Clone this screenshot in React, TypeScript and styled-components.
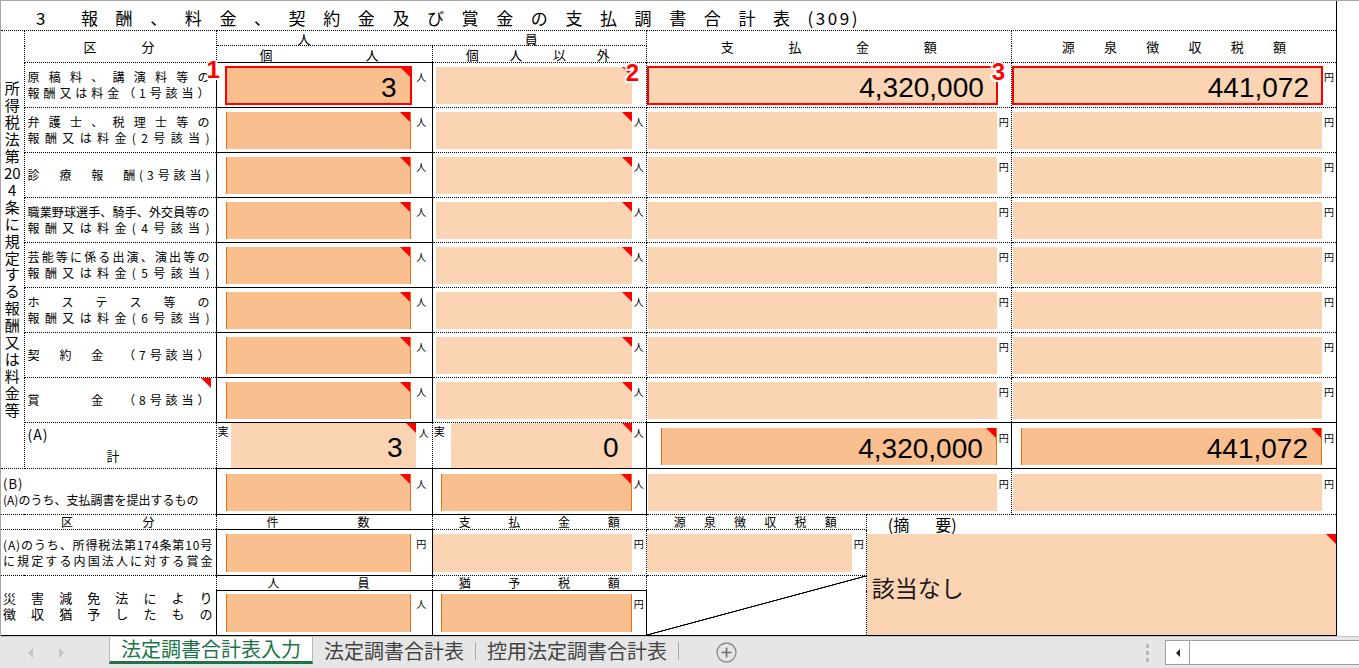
import React from 'react';
import styled, { createGlobalStyle } from 'styled-components';

const GlobalStyle = createGlobalStyle`
  html, body { margin: 0; padding: 0; background: #ffffff; }
  body { font-family: "Noto Sans CJK JP", "Noto Sans", sans-serif; color: #000; }
  * { box-sizing: border-box; }
`;

const Page = styled.div`
  width: 1359px;
  height: 668px;
  overflow: hidden;
  display: flex;
  flex-direction: column;
  background: #fff;
`;

const Sheet = styled.div`
  flex: none;
  height: 636px;
  border-top: 1px solid #a6a6a6;
  border-left: 1px solid #a6a6a6;
  display: flex;
  align-items: flex-start;
`;

const Grid = styled.table`
  border-collapse: collapse;
  table-layout: fixed;
  width: 1336px;
`;

const Col = styled.col<{ $w: number }>`
  width: ${(p) => p.$w}px;
`;

const Row = styled.tr<{ $h: number }>`
  height: ${(p) => p.$h}px;
`;

const line = (c: string) => (c === 's' ? '1px solid #000' : c === 'd' ? '1px dotted #000' : 'none');

const Cell = styled.td<{ $e?: string }>`
  position: relative;
  padding: 0;
  vertical-align: top;
  border-top: ${(p) => line((p.$e ?? 'dddd')[0])};
  border-right: ${(p) => line((p.$e ?? 'dddd')[1])};
  border-bottom: ${(p) => line((p.$e ?? 'dddd')[2])};
  border-left: ${(p) => line((p.$e ?? 'dddd')[3])};
`;

const Title = styled.div`
  height: 29px;
  display: flex;
  align-items: center;
  padding: 3px 0 0 35px;
  font-size: 17px;
  white-space: nowrap;
`;

const TitleNo = styled.span`
  width: 45px;
`;

const TitleSpaced = styled.span`
  letter-spacing: 17.6px;
`;

const TitleCode = styled.span`
  letter-spacing: 2.5px;
`;

const VerticalText = styled.div<{ $h: number }>`
  height: ${(p) => p.$h}px;
  display: flex;
  flex-direction: column;
  align-items: center;
  justify-content: center;
  font-size: 15px;
  line-height: 16.9px;
`;

const Spread = styled.div<{ $h?: number; $pl: number; $pr: number; $size?: number; $pt?: number }>`
  height: ${(p) => (p.$h ? `${p.$h}px` : 'auto')};
  display: flex;
  align-items: center;
  justify-content: space-between;
  padding: ${(p) => p.$pt ?? 0}px ${(p) => p.$pr}px 0 ${(p) => p.$pl}px;
  font-size: ${(p) => p.$size ?? 13}px;
  line-height: 1;
  white-space: nowrap;
`;

const RowLabel = styled.div<{ $h: number; $mark?: boolean; $pl?: number; $pr?: number; $size?: number }>`
  position: relative;
  height: ${(p) => p.$h}px;
  display: flex;
  flex-direction: column;
  justify-content: center;
  padding: 0 ${(p) => p.$pr ?? 6}px 0 ${(p) => p.$pl ?? 3}px;
  font-size: ${(p) => p.$size ?? 12}px;
  line-height: 16px;
  &::after {
    content: '';
    display: ${(p) => (p.$mark ? 'block' : 'none')};
    position: absolute;
    top: 0;
    right: 5px;
    border-top: 10px solid #ff0000;
    border-left: 10px solid transparent;
  }
`;

const LabelLine = styled.div`
  display: flex;
  justify-content: space-between;
  white-space: nowrap;
`;

const PlainLine = styled.div<{ $ls?: number; $size?: number }>`
  white-space: nowrap;
  letter-spacing: ${(p) => p.$ls ?? 0}px;
  font-size: ${(p) => (p.$size ? `${p.$size}px` : 'inherit')};
`;

const SumLabel = styled.div<{ $h: number }>`
  height: ${(p) => p.$h}px;
  display: flex;
  flex-direction: column;
  padding: 4px 0 0 3px;
  font-size: 14px;
  line-height: 14px;
`;

const SumMark = styled.span`
  margin: 8px 0 0 79px;
  font-size: 13px;
`;

const Slot = styled.div<{ $h: number; $pt?: number; $pb?: number }>`
  height: ${(p) => p.$h}px;
  display: flex;
  padding: ${(p) => p.$pt ?? 4}px 0 ${(p) => p.$pb ?? 3}px;
`;

const Field = styled.div<{ $tone: 'dark' | 'light'; $ml?: number; $hl?: boolean; $mark?: boolean }>`
  position: relative;
  flex: 1;
  min-width: 0;
  margin-left: ${(p) => p.$ml ?? 0}px;
  background: ${(p) => (p.$tone === 'dark' ? '#fabf8f' : '#fbd4b4')};
  border-left: ${(p) => (p.$tone === 'dark' ? '1px solid #e8701a' : 'none')};
  border-right: ${(p) => (p.$tone === 'dark' ? '1px solid #e8701a' : 'none')};
  outline: ${(p) => (p.$hl ? '2px solid #ff0000' : 'none')};
  outline-offset: -1px;
  display: flex;
  align-items: center;
  justify-content: flex-end;
  padding: 4px 13px 0 0;
  font-family: "Liberation Sans", Arial, sans-serif;
  font-size: 28px;
  line-height: 28px;
  color: #000;
  &::after {
    content: '';
    display: ${(p) => (p.$mark ? 'block' : 'none')};
    position: absolute;
    top: 0;
    right: 0;
    border-top: 10px solid #ff0000;
    border-left: 10px solid transparent;
  }
`;

const NoteField = styled(Field)`
  justify-content: flex-start;
  padding: 6px 0 0 5px;
  font-family: "Noto Sans CJK JP", sans-serif;
  font-size: 23px;
  color: #1a1a1a;
`;

const Unit = styled.span<{ $w: number }>`
  flex: none;
  width: ${(p) => p.$w}px;
  text-align: center;
  font-size: 10px;
  line-height: 10px;
  padding-top: 5px;
`;

const Jitsu = styled.span<{ $w: number }>`
  flex: none;
  width: ${(p) => p.$w}px;
  font-size: 11px;
  line-height: 11px;
  padding: 3px 0 0 1px;
`;

const Badge = styled.span<{ $x: number; $y: number }>`
  position: absolute;
  left: ${(p) => p.$x}px;
  top: ${(p) => p.$y}px;
  font-family: "Liberation Sans", Arial, sans-serif;
  font-weight: 700;
  font-size: 24px;
  line-height: 24px;
  color: #ff0000;
  text-shadow: -1.5px -1.5px 0 #fff, 1.5px -1.5px 0 #fff, -1.5px 1.5px 0 #fff, 1.5px 1.5px 0 #fff, 0 -2px 0 #fff,
    0 2px 0 #fff, -2px 0 0 #fff, 2px 0 0 #fff;
  z-index: 2;
`;

const NoteHead = styled.div`
  height: 14px;
  display: flex;
  padding: 1px 0 0 21px;
  font-size: 16px;
  line-height: 16px;
  white-space: nowrap;
  gap: 26px;
`;

const Diagonal = styled.div<{ $h: number }>`
  height: ${(p) => p.$h}px;
  background: linear-gradient(
    to bottom right,
    transparent calc(50% - 0.8px),
    #000 calc(50% - 0.4px),
    #000 calc(50% + 0.4px),
    transparent calc(50% + 0.8px)
  );
`;

/* ---- Tab bar ---- */
const TabBar = styled.div`
  flex: none;
  height: 32px;
  background: #e6e6e6;
  border-top: 1px solid #c6c6c6;
  display: flex;
  align-items: flex-start;
`;

const NavArrows = styled.div`
  flex: none;
  width: 109px;
  height: 31px;
  display: flex;
  align-items: center;
  padding: 0 0 0 28px;
  gap: 26px;
`;

const Arrow = styled.span<{ $dir: 'left' | 'right' }>`
  width: 0;
  height: 0;
  border-top: 5px solid transparent;
  border-bottom: 5px solid transparent;
  ${(p) => (p.$dir === 'left' ? 'border-right: 5px solid #c4c4c4;' : 'border-left: 5px solid #c4c4c4;')}
`;

const Tab = styled.div<{ $active?: boolean }>`
  flex: none;
  height: 27px;
  padding: 0 11px;
  display: flex;
  align-items: center;
  font-size: 20px;
  line-height: 24px;
  white-space: nowrap;
  color: ${(p) => (p.$active ? '#217346' : '#444444')};
  background: ${(p) => (p.$active ? '#ffffff' : 'transparent')};
  border-left: ${(p) => (p.$active ? '1px solid #b8b8b8' : 'none')};
  border-right: ${(p) => (p.$active ? '1px solid #b8b8b8' : 'none')};
  border-bottom: ${(p) => (p.$active ? '3px solid #217346' : 'none')};
`;

const TabSep = styled.span`
  flex: none;
  width: 1px;
  height: 18px;
  margin-top: 5px;
  background: #a8a8a8;
`;

const AddButton = styled.div`
  flex: none;
  margin: 5px 0 0 37px;
  width: 21px;
  height: 21px;
  display: flex;
  align-items: center;
  justify-content: center;
`;

const Spacer = styled.div`
  flex: 1;
`;

const Grip = styled.div`
  flex: none;
  width: 3px;
  margin-top: 7px;
  display: flex;
  flex-direction: column;
  gap: 3px;
  & > span {
    width: 3px;
    height: 4px;
    background: #b8b8b8;
  }
`;

const ScrollBox = styled.div`
  flex: none;
  width: 194px;
  height: 25px;
  margin: 3px 0 0 16px;
  background: #fff;
  border: 1px solid #a0a0a0;
  border-right: none;
  display: flex;
`;

const ScrollBtn = styled.div`
  width: 24px;
  height: 100%;
  border-right: 1px solid #a0a0a0;
  display: flex;
  align-items: center;
  justify-content: center;
  &::before {
    content: '';
    border-top: 4px solid transparent;
    border-bottom: 4px solid transparent;
    border-right: 4px solid #222;
  }
`;

const chars = (s: string) => Array.from(s).map((c, i) => <span key={i}>{c}</span>);

const COLS = [23, 192, 216, 214, 220, 145, 325];
const VERT = ['所', '得', '税', '法', '第', '20', '4', '条', 'に', '規', '定', 'す', 'る', '報', '酬', '又', 'は', '料', '金', '等'];

const ROWS: { lines: string[]; mark?: boolean }[] = [
  { lines: ['原稿料、講演料等の', '報酬又は料金（1号該当）'] },
  { lines: ['弁護士、税理士等の', '報酬又は料金(2号該当)'] },
  { lines: ['診　療　報　酬(3号該当)'] },
  { lines: ['職業野球選手、騎手、外交員等の', '報酬又は料金(4号該当)'] },
  { lines: ['芸能等に係る出演、演出等の', '報酬又は料金(5号該当)'] },
  { lines: ['ホステス等の', '報酬又は料金(6号該当)'] },
  { lines: ['契　約　金　（7号該当）'] },
  { lines: ['賞　　　金　（8号該当）'], mark: true },
];

export default function App() {
  return (
    <>
      <GlobalStyle />
      <Page>
        <Sheet>
          <Grid>
            <colgroup>
              {COLS.map((w, i) => (
                <Col key={i} $w={w} />
              ))}
            </colgroup>
            <tbody>
              <Row $h={29}>
                <Cell colSpan={7} $e="nsdn">
                  <Title>
                    <TitleNo>3</TitleNo>
                    <TitleSpaced>報酬、料金、契約金及び賞金の支払調書合計表</TitleSpaced>
                    <TitleCode>(309)</TitleCode>
                  </Title>
                </Cell>
              </Row>

              <Row $h={15}>
                <Cell rowSpan={11} $e="dddn">
                  <VerticalText $h={437}>
                    {VERT.map((c, i) => (
                      <span key={i}>{c}</span>
                    ))}
                  </VerticalText>
                </Cell>
                <Cell rowSpan={2}>
                  <Spread $h={31} $pl={59} $pr={61}>{chars('区分')}</Spread>
                </Cell>
                <Cell colSpan={2}>
                  <Spread $h={14} $pl={81} $pr={108}>{chars('人員')}</Spread>
                </Cell>
                <Cell colSpan={2} rowSpan={2}>
                  <Spread $h={31} $pl={74} $pr={74}>{chars('支払金額')}</Spread>
                </Cell>
                <Cell rowSpan={2} $e="dsdd">
                  <Spread $h={31} $pl={50} $pr={50}>{chars('源泉徴収税額')}</Spread>
                </Cell>
              </Row>
              <Row $h={17}>
                <Cell $e="ddsd">
                  <Spread $h={16} $pl={43} $pr={53}>{chars('個人')}</Spread>
                </Cell>
                <Cell>
                  <Spread $h={16} $pl={33} $pr={36}>{chars('個人以外')}</Spread>
                </Cell>
              </Row>

              {ROWS.map((r, i) => {
                const first = i === 0;
                return (
                  <Row key={i} $h={45}>
                    <Cell>
                      <RowLabel $h={44} $mark={r.mark}>
                        {r.lines.map((l) => (
                          <LabelLine key={l}>{chars(l)}</LabelLine>
                        ))}
                      </RowLabel>
                    </Cell>
                    <Cell $e="ssss">
                      <Slot $h={44}>
                        <Field $tone="dark" $ml={9} $mark $hl={first}>
                          {first ? '3' : ''}
                        </Field>
                        <Unit $w={21}>人</Unit>
                      </Slot>
                      {first && (
                        <Badge $x={-10} $y={-5}>
                          1
                        </Badge>
                      )}
                    </Cell>
                    <Cell>
                      <Slot $h={44}>
                        <Field $tone="light" $ml={3} $mark />
                        <Unit $w={14}>{first ? '' : '人'}</Unit>
                      </Slot>
                      {first && (
                        <Badge $x={193} $y={-2}>
                          2
                        </Badge>
                      )}
                    </Cell>
                    <Cell colSpan={2}>
                      <Slot $h={44}>
                        <Field $tone="light" $ml={1} $hl={first}>
                          {first ? '4,320,000' : ''}
                        </Field>
                        <Unit $w={14}>{first ? '' : '円'}</Unit>
                      </Slot>
                      {first && (
                        <Badge $x={345} $y={-3}>
                          3
                        </Badge>
                      )}
                    </Cell>
                    <Cell $e="dsdd">
                      <Slot $h={44}>
                        <Field $tone="light" $ml={1} $hl={first}>
                          {first ? '441,072' : ''}
                        </Field>
                        <Unit $w={14}>円</Unit>
                      </Slot>
                    </Cell>
                  </Row>
                );
              })}

              <Row $h={46}>
                <Cell>
                  <SumLabel $h={45}>
                    <PlainLine $ls={1}>(A)</PlainLine>
                    <SumMark>計</SumMark>
                  </SumLabel>
                </Cell>
                <Cell $e="sdsd">
                  <Slot $h={45} $pt={0} $pb={0}>
                    <Jitsu $w={14}>実</Jitsu>
                    <Field $tone="light" $mark>
                      3
                    </Field>
                    <Unit $w={16}>人</Unit>
                  </Slot>
                </Cell>
                <Cell $e="dssd">
                  <Slot $h={45} $pt={0} $pb={0}>
                    <Jitsu $w={18}>実</Jitsu>
                    <Field $tone="light" $mark>
                      0
                    </Field>
                    <Unit $w={14}>人</Unit>
                  </Slot>
                </Cell>
                <Cell colSpan={2} $e="ssss">
                  <Slot $h={45} $pt={5} $pb={3}>
                    <Field $tone="dark" $ml={14} $mark>
                      4,320,000
                    </Field>
                    <Unit $w={14}>円</Unit>
                  </Slot>
                </Cell>
                <Cell $e="ssss">
                  <Slot $h={45} $pt={5} $pb={3}>
                    <Field $tone="dark" $ml={9} $mark>
                      441,072
                    </Field>
                    <Unit $w={14}>円</Unit>
                  </Slot>
                </Cell>
              </Row>

              <Row $h={46}>
                <Cell colSpan={2} $e="dddn">
                  <RowLabel $h={45} $pl={2} $pr={0}>
                    <PlainLine $ls={1} $size={13}>(B)</PlainLine>
                    <PlainLine>(A)のうち、支払調書を提出するもの</PlainLine>
                  </RowLabel>
                </Cell>
                <Cell $e="ssss">
                  <Slot $h={45} $pt={5} $pb={3}>
                    <Field $tone="dark" $ml={9} $mark />
                    <Unit $w={21}>人</Unit>
                  </Slot>
                </Cell>
                <Cell $e="ssss">
                  <Slot $h={45} $pt={5} $pb={3}>
                    <Field $tone="dark" $ml={8} $mark />
                    <Unit $w={14}>人</Unit>
                  </Slot>
                </Cell>
                <Cell colSpan={2}>
                  <Slot $h={45} $pt={5} $pb={3}>
                    <Field $tone="light" $ml={1} />
                    <Unit $w={14}>円</Unit>
                  </Slot>
                </Cell>
                <Cell $e="dsdd">
                  <Slot $h={45} $pt={5} $pb={3}>
                    <Field $tone="light" $ml={1} />
                    <Unit $w={14}>円</Unit>
                  </Slot>
                </Cell>
              </Row>

              <Row $h={15}>
                <Cell colSpan={2} $e="dddn">
                  <Spread $h={14} $pl={60} $pr={61} $size={12}>
                    {chars('区分')}
                  </Spread>
                </Cell>
                <Cell $e="ddsd">
                  <Spread $h={14} $pl={50} $pr={62} $size={12}>
                    {chars('件数')}
                  </Spread>
                </Cell>
                <Cell>
                  <Spread $h={14} $pl={26} $pr={26} $size={12}>
                    {chars('支払金額')}
                  </Spread>
                </Cell>
                <Cell>
                  <Spread $h={14} $pl={27} $pr={29} $size={12}>
                    {chars('源泉徴収税額')}
                  </Spread>
                </Cell>
                <Cell colSpan={2} $e="dsnd">
                  <NoteHead>
                    <span>(摘</span>
                    <span>要)</span>
                  </NoteHead>
                </Cell>
              </Row>

              <Row $h={46}>
                <Cell colSpan={2} $e="dddn">
                  <RowLabel $h={45} $pl={2} $pr={3}>
                    <LabelLine>{chars('(A)のうち、所得税法第174条第10号')}</LabelLine>
                    <LabelLine>{chars('に規定する内国法人に対する賞金')}</LabelLine>
                  </RowLabel>
                </Cell>
                <Cell $e="ssss">
                  <Slot $h={45}>
                    <Field $tone="dark" $ml={9} />
                    <Unit $w={21}>円</Unit>
                  </Slot>
                </Cell>
                <Cell>
                  <Slot $h={45}>
                    <Field $tone="light" />
                    <Unit $w={14}>円</Unit>
                  </Slot>
                </Cell>
                <Cell>
                  <Slot $h={45}>
                    <Field $tone="light" />
                    <Unit $w={14}>円</Unit>
                  </Slot>
                </Cell>
                <Cell colSpan={2} rowSpan={3} $e="nssd">
                  <Slot $h={105} $pt={4} $pb={0}>
                    <NoteField $tone="light" $mark>
                      該当なし
                    </NoteField>
                  </Slot>
                </Cell>
              </Row>

              <Row $h={15}>
                <Cell colSpan={2} rowSpan={2} $e="ddsn">
                  <RowLabel $h={59} $pl={2} $pr={3} $size={13}>
                    <LabelLine>{chars('災害減免法により')}</LabelLine>
                    <LabelLine>{chars('徴収猶予したもの')}</LabelLine>
                  </RowLabel>
                </Cell>
                <Cell $e="ddsd">
                  <Spread $h={14} $pl={51} $pr={62} $size={12}>
                    {chars('人員')}
                  </Spread>
                </Cell>
                <Cell $e="ddsd">
                  <Spread $h={14} $pl={26} $pr={26} $size={12}>
                    {chars('猶予税額')}
                  </Spread>
                </Cell>
                <Cell rowSpan={2} $e="ddsd">
                  <Diagonal $h={59} />
                </Cell>
              </Row>
              <Row $h={45}>
                <Cell $e="ssss">
                  <Slot $h={44} $pt={3} $pb={3}>
                    <Field $tone="dark" $ml={9} />
                    <Unit $w={21}>人</Unit>
                  </Slot>
                </Cell>
                <Cell $e="ssss">
                  <Slot $h={44} $pt={3} $pb={3}>
                    <Field $tone="dark" $ml={8} />
                    <Unit $w={14}>円</Unit>
                  </Slot>
                </Cell>
              </Row>
            </tbody>
          </Grid>
        </Sheet>

        <TabBar>
          <NavArrows>
            <Arrow $dir="left" />
            <Arrow $dir="right" />
          </NavArrows>
          <Tab $active>法定調書合計表入力</Tab>
          <Tab>法定調書合計表</Tab>
          <TabSep />
          <Tab>控用法定調書合計表</Tab>
          <TabSep />
          <AddButton>
            <svg width="21" height="21" viewBox="0 0 21 21">
              <circle cx="10.5" cy="10.5" r="9.5" fill="none" stroke="#8a8a8a" strokeWidth="1.3" />
              <path d="M10.5 5.5v10M5.5 10.5h10" stroke="#6e6e6e" strokeWidth="1.6" />
            </svg>
          </AddButton>
          <Spacer />
          <Grip>
            <span />
            <span />
            <span />
          </Grip>
          <ScrollBox>
            <ScrollBtn />
          </ScrollBox>
        </TabBar>
      </Page>
    </>
  );
}
